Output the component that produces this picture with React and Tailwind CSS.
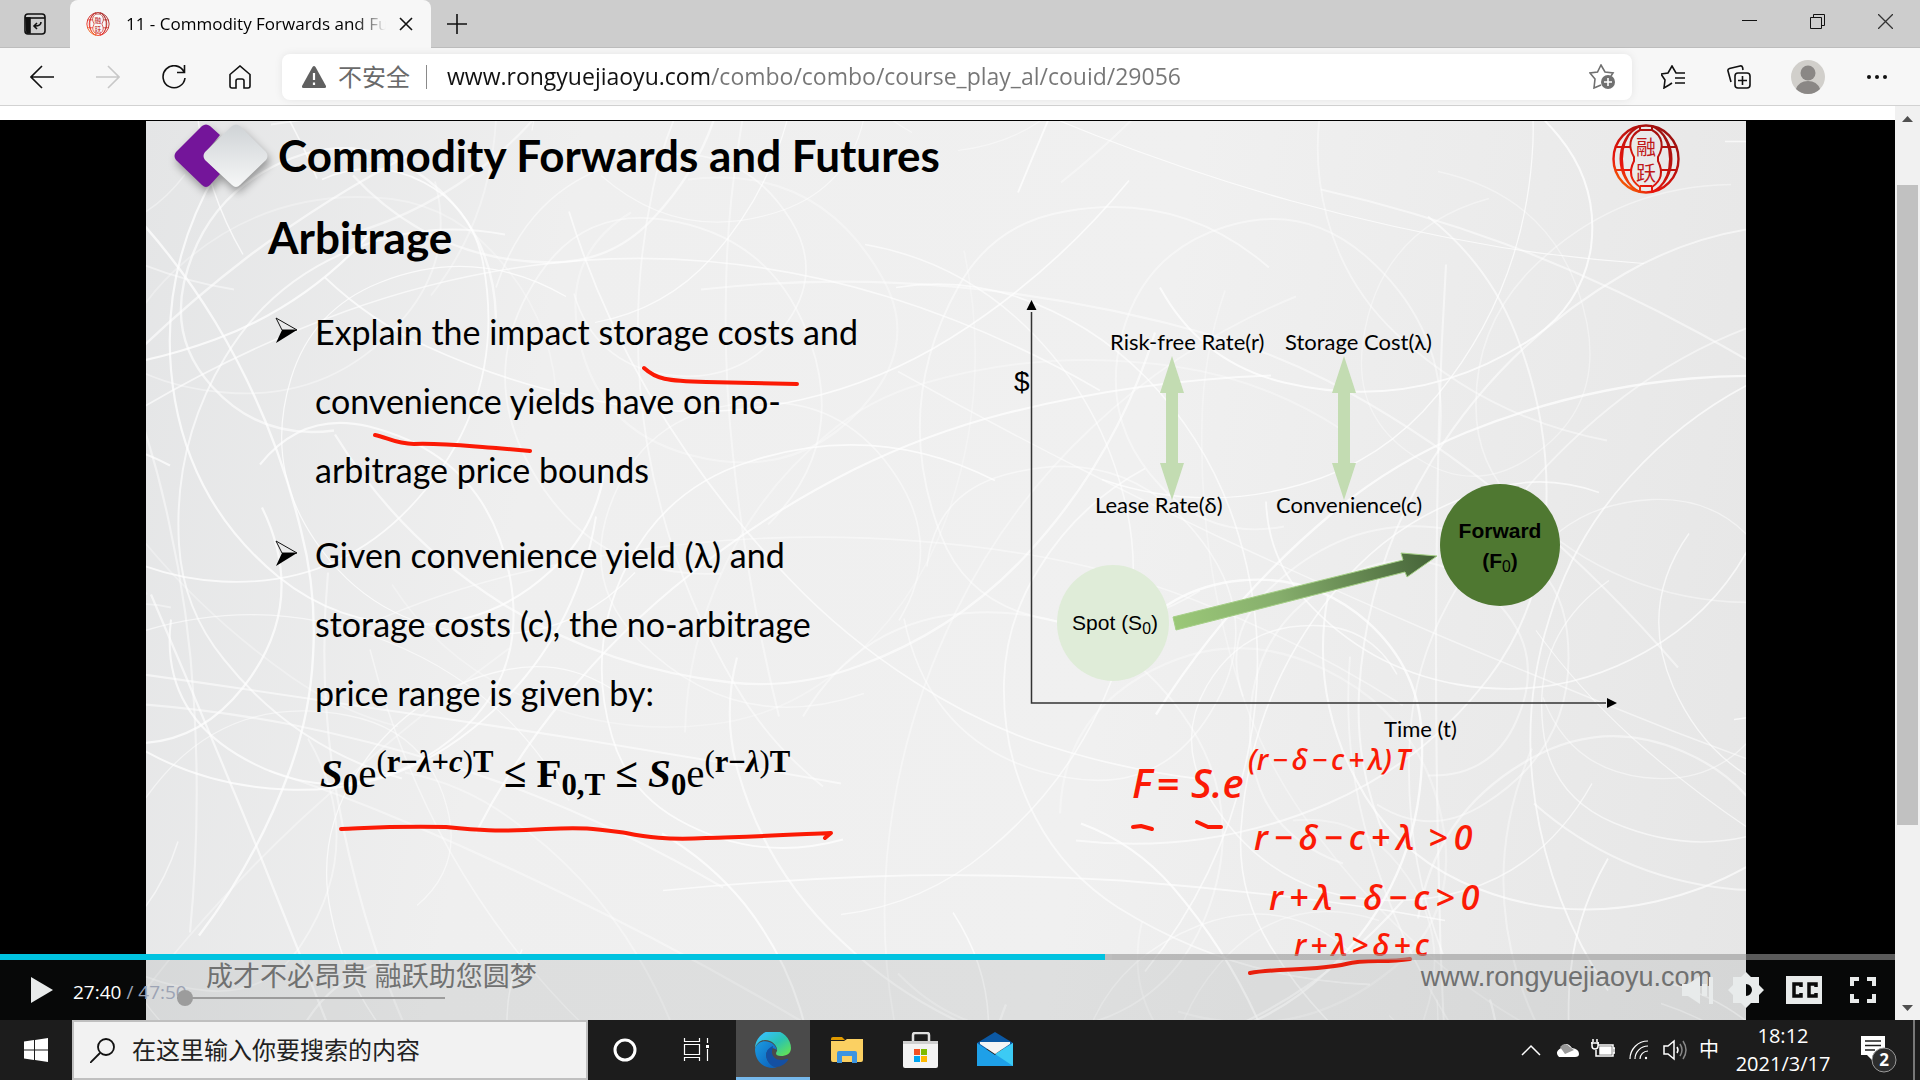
import React, { useState } from 'react';

// long loose strokes for the slide paper, always the same for a given seed
const makeScribbles = (count, seed) => {
  let s = seed;
  const rand = () => {
    s = (s * 16807) % 2147483647;
    return s / 2147483647;
  };
  const lines = [];
  for (let i = 0; i < count; i++) {
    const x = rand() * 1600;
    const y = rand() * 900;
    let d = `M${x.toFixed(0)} ${y.toFixed(0)}`;
    let px = x;
    let py = y;
    let angle = rand() * 6.28;
    const turn = (rand() - 0.5) * 2.4;
    for (let j = 0; j < 5; j++) {
      const len = 110 + rand() * 170;
      const cx = px + Math.cos(angle) * len * 0.5;
      const cy = py + Math.sin(angle) * len * 0.5;
      angle += turn;
      px = cx + Math.cos(angle) * len * 0.5;
      py = cy + Math.sin(angle) * len * 0.5;
      d += ` Q${cx.toFixed(0)} ${cy.toFixed(0)} ${px.toFixed(0)} ${py.toFixed(0)}`;
    }
    lines.push({ d, w: 1.2 + rand() * 1.2, o: 0.3 + rand() * 0.45 });
  }
  return lines;
};

const scribbles = makeScribbles(110, 4211);

const Seal = ({ className, id }) => (
  <svg viewBox="0 0 68 70" className={className} fill="none" stroke={`url(#${id})`} strokeWidth="2">
    <defs>
      <linearGradient id={id} x1="0" y1="70" x2="60" y2="0" gradientUnits="userSpaceOnUse">
        <stop offset="0" stopColor="#ffa800" />
        <stop offset="0.3" stopColor="#e8150c" />
        <stop offset="1" stopColor="#8f1010" />
      </linearGradient>
    </defs>
    <ellipse cx="34" cy="35" rx="32.5" ry="33.5" strokeWidth="2.4" />
    <path d="M28 2C2 14 2 56 28 68M22 5C6 20 6 50 22 65M40 2C66 14 66 56 40 68M46 5C62 20 62 50 46 65" />
    <path d="M28 2v4c-11 6-12 17-6 27v4c-6 12-3 20 6 26v5M40 2v4c11 6 12 17 6 27v4c6 12 3 20-6 26v5" />
    <path d="M4 23h15M49 23h15M4 46h15M49 46h15M28 6h12M28 62h12" />
    <text x="34" y="31" textAnchor="middle" fontSize="20" fill="#c01818" stroke="none" fontFamily="Noto Sans CJK SC, sans-serif">融</text>
    <text x="34" y="57" textAnchor="middle" fontSize="20" fill="#c01818" stroke="none" fontFamily="Noto Sans CJK SC, sans-serif">跃</text>
  </svg>
);

const TitleBar = () => (
  <div className="flex h-12 bg-[#cdcdcd] border-b border-[#bdbdbd]">
    <button aria-label="Tab actions" className="w-[70px] flex items-center justify-center">
      <svg viewBox="0 0 22 22" className="w-[22px] h-[22px]" fill="none" stroke="#111" strokeWidth="1.6">
        <rect x="1" y="1" width="20" height="20" rx="3" />
        <path d="M1 5h20" />
        <path d="M2 5h4v15H3z" fill="#111" />
        <path d="M17 9c0 3-2 4-6 4M13 10l-3 3 3 3" />
      </svg>
    </button>
    <div className="flex items-center w-[361px] h-12 pl-4 pr-[18px] bg-[#f7f7f7] rounded-t-lg">
      <Seal id="tabSeal" className="w-6 h-6 shrink-0" />
      <span className="ml-4 w-[260px] overflow-hidden whitespace-nowrap text-[17px] bg-linear-to-r from-black from-88% to-transparent bg-clip-text text-transparent">
        11 - Commodity Forwards and Futures
      </span>
      <button aria-label="Close tab" className="ml-auto">
        <svg viewBox="0 0 14 14" className="w-[14px] h-[14px]" stroke="#111" strokeWidth="1.6"><path d="M1 1l12 12M13 1L1 13" /></svg>
      </button>
    </div>
    <button aria-label="New tab" className="w-[52px] flex items-center justify-center">
      <svg viewBox="0 0 20 20" className="w-5 h-5" stroke="#111" strokeWidth="1.6"><path d="M10 0v20M0 10h20" /></svg>
    </button>
    <div className="ml-auto flex pb-1">
      <button aria-label="Minimize" className="w-[68px] flex items-center justify-center">
        <svg viewBox="0 0 15 15" className="w-[15px] h-[15px]" stroke="#111"><path d="M0 6.5h15" /></svg>
      </button>
      <button aria-label="Restore" className="w-[68px] flex items-center justify-center">
        <svg viewBox="0 0 15 15" className="w-[15px] h-[15px]" stroke="#111" fill="none"><path d="M.5 3.5h11v11H.5zM3.5 3V.5h11v11H12" /></svg>
      </button>
      <button aria-label="Close" className="w-[69px] flex items-center justify-center">
        <svg viewBox="0 0 15 15" className="w-[15px] h-[15px]" stroke="#333" strokeWidth="1.3"><path d="M0 0l15 15M15 0L0 15" /></svg>
      </button>
    </div>
  </div>
);

const NavButton = ({ label, stroke = '#111', children }) => (
  <button aria-label={label} className="w-[66px] h-full flex items-center justify-center">
    <svg viewBox="0 0 24 24" className="w-6 h-6" fill="none" stroke={stroke} strokeWidth="1.6">{children}</svg>
  </button>
);

const AddressBar = () => {
  const [url, setUrl] = useState('www.rongyuejiaoyu.com/combo/combo/course_play_al/couid/29056');

  return (
    <div className="flex items-center h-[58px] bg-[#f7f7f7] border-b border-[#d2d2d2]">
      <div className="flex h-full pl-[9px]">
        <NavButton label="Back"><path d="M24 12H1M12 1L1 12l11 11" /></NavButton>
        <NavButton label="Forward" stroke="#c8c8c8"><path d="M0 12h23M12 1l11 11-11 11" /></NavButton>
        <NavButton label="Refresh"><path d="M22 7A11 11 0 1 0 23 13M22.5 0v7.5H15" /></NavButton>
        <NavButton label="Home"><path d="M2 9.5L12 1l10 8.5V21q0 2-2 2h-4v-7q0-2-2-2h-4q-2 0-2 2v7H4q-2 0-2-2z" /></NavButton>
      </div>
      <div className="flex flex-1 items-center h-[46px] ml-[9px] pl-5 pr-4 bg-white rounded-lg shadow-[0_0_8px_rgba(0,0,0,0.08)]">
        <svg viewBox="0 0 24 22" className="w-6 h-[22px]" fill="#606060">
          <path d="M10.500 1q1.500-2 3 0L24 20q.5 2-1.500 2h-21Q-.5 22 0 20z" />
          <path d="M12 7v7M12 16.500v2.500" stroke="#fff" strokeWidth="2.2" />
        </svg>
        <span className="ml-3 text-2xl text-[#6a6a6a]">不安全</span>
        <span className="ml-4 w-px h-6 bg-[#8a8a8a]" />
        <input
          aria-label="Address"
          value={url}
          onChange={(e) => setUrl(e.target.value)}
          className="flex-1 ml-5 text-[23px] outline-none text-transparent bg-clip-text bg-[linear-gradient(90deg,#111_263px,#767676_263px)] caret-black"
        />
        <button aria-label="Add to favorites">
          <svg viewBox="0 0 27 25" className="w-[27px] h-[25px]" fill="none" stroke="#707070" strokeWidth="1.6">
            <path d="M12 21l-7 3 1-9-5-6 7.500-1L12 1l4 7 8 1-2 3" />
            <circle cx="19" cy="18" r="7" fill="#707070" stroke="none" />
            <path d="M19 14v8M15 18h8" stroke="#fff" />
          </svg>
        </button>
      </div>
      <div className="flex h-full items-center pl-2 pr-[10px]">
        <NavButton label="Favorites"><path d="M8 20l-5 3 1-8-4-6 7-1 4-7 4 7h9M14 13h10M14 18h10M8 20l3-2" /></NavButton>
        <NavButton label="Collections">
          <path d="M4 17L1 6q-.5-2 1.500-2.600L13 1q2-.5 2.600 1.500L16 5M8 11q0-3 3-3h9q3 0 3 3v9q0 3-3 3h-9q-3 0-3-3zM15.500 11v9M11 15.500h9" />
        </NavButton>
        <button aria-label="Profile" className="w-[72px] flex justify-center">
          <svg viewBox="0 0 34 34" className="w-[34px] h-[34px]">
            <circle cx="17" cy="17" r="17" fill="#d1cfcb" />
            <circle cx="17" cy="13" r="7.5" fill="#8a8785" />
            <path d="M5 29q3-8 12-8t12 8q-5 5-12 5T5 29" fill="#8a8785" />
          </svg>
        </button>
        <NavButton label="Settings and more">
          <g fill="#111" stroke="none"><circle cx="4" cy="12" r="2" /><circle cx="12" cy="12" r="2" /><circle cx="20" cy="12" r="2" /></g>
        </NavButton>
      </div>
    </div>
  );
};

const Bullet = ({ children }) => (
  <li className="flex">
    <svg viewBox="0 0 24 26" className="w-6 h-[26px] mt-5 mr-4 shrink-0">
      <path d="M1 1l21 12H7z" fill="none" stroke="#111" />
      <path d="M7 13h15L1 26z" fill="#000" />
    </svg>
    <div>{children}</div>
  </li>
);

const Formula = () => (
  <p className="pl-[174px] pt-4 text-[41px] leading-[60px] font-bold font-['Liberation_Serif',serif] whitespace-nowrap">
    <i>S</i><sub>0</sub><span className="font-normal">e</span>
    <sup><span className="font-normal">(</span>r−<i>λ</i>+<i>c</i><span className="font-normal">)</span>T</sup>
    {' ≤ F'}<sub>0,T</sub>{' ≤ '}
    <i>S</i><sub>0</sub><span className="font-normal">e</span>
    <sup><span className="font-normal">(</span>r−<i>λ</i><span className="font-normal">)</span>T</sup>
  </p>
);

const labels = [
  { text: 'Risk-free Rate(r)', place: 'left-[100px] top-[40px]' },
  { text: 'Storage Cost(λ)', place: 'left-[275px] top-[40px]' },
  { text: 'Lease Rate(δ)', place: 'left-[85px] top-[203px]' },
  { text: 'Convenience(c)', place: 'left-[266px] top-[203px]' },
  { text: 'Time (t)', place: 'left-[374px] top-[427px]' },
];

const Diagram = () => (
  <div className="relative w-[620px] h-[470px] text-[22px]">
    <svg viewBox="0 0 620 470" className="absolute inset-0 w-full h-full">
      <defs>
        <linearGradient id="rise" x1="163" y1="335" x2="427" y2="266" gradientUnits="userSpaceOnUse">
          <stop offset="0" stopColor="#9bc878" />
          <stop offset="0.4" stopColor="#86ae6c" />
          <stop offset="1" stopColor="#446237" />
        </linearGradient>
      </defs>
      <path d="M21.500 22V413H596" fill="none" stroke="#333" strokeWidth="1.5" />
      <path d="M21.500 10l5 10h-10zM607 413l-10-5v10z" fill="#000" />
      <path d="M162 66l12 37h-6v70h6l-12 37-12-37h6v-70h-6z" fill="#c3dcb2" />
      <path d="M334 66l12 37h-6v70h6l-12 37-12-37h6v-70h-6z" fill="#c3dcb2" />
      <ellipse cx="103" cy="333" rx="56" ry="58" fill="#dfecd8" />
      <ellipse cx="490" cy="255" rx="60" ry="61" fill="#4f7831" />
      <path d="M163 327l230-57-2-7 36 3-30 21-2-5-229 58z" fill="url(#rise)" stroke="#a5cf86" />
    </svg>
    {labels.map((label) => (
      <span key={label.text} className={`absolute leading-6 whitespace-nowrap ${label.place}`}>{label.text}</span>
    ))}
    <span className="absolute left-[4px] top-[76px] text-[28px] leading-8 font-['Liberation_Sans',sans-serif]">$</span>
    <span className="absolute left-[45px] top-[321px] w-[120px] text-center text-[21px] leading-6 font-['Liberation_Sans',sans-serif]">
      Spot (S<sub>0</sub>)
    </span>
    <span className="absolute left-[430px] top-[226px] w-[120px] text-center text-[21px] leading-[30px] font-bold font-['Liberation_Sans',sans-serif]">
      Forward<br />(F<sub className="font-normal">0</sub>)
    </span>
  </div>
);

// red pen notes lying over the slide
const Ink = () => (
  <div className="absolute inset-0 text-[#fb1a05] font-['Open_Sans','Noto_Sans',sans-serif] italic whitespace-nowrap">
    <svg viewBox="0 0 1600 900" className="absolute left-0 top-0 w-[1600px] h-[900px]" fill="none" stroke="#fb1a05" strokeWidth="4" strokeLinecap="round" strokeLinejoin="round">
      <path d="M498 247C510 258 520 260 560 261L651 263" />
      <path d="M229 314C240 316 250 323 268 323C300 322 330 326 350 327L384 330" />
      <path d="M195 708C240 706 250 705 300 706C330 709 350 711 400 708C440 706 450 708 480 712C500 716 520 719 560 717C600 716 640 714 685 712L679 717" />
      <path d="M987 706l8-1 11 3M1051 701l11 5h13" />
      <path d="M1104 852C1130 847 1170 850 1200 843C1220 838 1240 842 1264 838" />
    </svg>
    <div className="absolute left-[986px] top-[634px] flex items-baseline text-[40px] leading-[56px] font-semibold">
      <span>F</span><span className="ml-1">=</span><span className="ml-3">S.</span><span>e</span>
    </div>
    <div className="absolute left-[1102px] top-[622px] flex gap-1 text-[28px] leading-8 font-semibold">
      <span>(r</span><span>−</span><span>δ</span><span>−</span><span>c</span><span>+</span><span>λ)</span><span>T</span>
    </div>
    <div className="absolute left-[1108px] top-[694px] flex gap-[6px] text-[34px] leading-[44px] font-semibold">
      <span>r</span><span>−</span><span>δ</span><span>−</span><span>c</span><span>+</span><span>λ</span><span className="ml-2">&gt;</span><span>0</span>
    </div>
    <div className="absolute left-[1123px] top-[754px] flex gap-[6px] text-[34px] leading-[44px] font-semibold">
      <span>r</span><span>+</span><span>λ</span><span>−</span><span>δ</span><span>−</span><span>c</span><span>&gt;</span><span>0</span>
    </div>
    <div className="absolute left-[1148px] top-[806px] flex gap-1 text-[30px] leading-9 font-semibold">
      <span>r</span><span>+</span><span>λ</span><span>&gt;</span><span>δ</span><span>+</span><span>c</span>
    </div>
  </div>
);

const Slide = () => (
  <div className="relative w-full max-w-[1600px] h-full mx-auto overflow-hidden border-t border-black bg-[linear-gradient(100deg,#e4e5e6,#efefef_25%,#f0f0f0_60%,#e6e6e6)] text-black font-[Lato,'Noto_Sans',sans-serif]">
    <svg viewBox="0 0 1600 900" preserveAspectRatio="xMidYMid slice" className="absolute inset-0 w-full h-full" fill="none" stroke="#fff">
      {scribbles.map((line, i) => (
        <path key={i} d={line.d} strokeWidth={line.w} strokeOpacity={line.o} />
      ))}
    </svg>
    <div className="relative">
      <header className="flex items-center h-[68px] pl-7 pr-[66px]">
        <svg viewBox="0 0 96 78" className="w-24 h-[78px] mt-1 overflow-visible">
          <defs>
            <linearGradient id="tile" x1="0" y1="0" x2="0" y2="1">
              <stop offset="0" stopColor="#cfd3d6" />
              <stop offset="1" stopColor="#f6f7f7" />
            </linearGradient>
          </defs>
          <g className="drop-shadow-[2px_5px_4px_rgba(0,0,0,0.35)]">
            <path d="M28 8q4-3 8 0l10 9-14 17q-3 4 0 8l14 14-10 11q-4 4-8 0L2 42q-3-4 0-8z" fill="#74159a" />
            <path d="M58 8q4-3 8 0l26 26q3 4 0 8L66 67q-4 4-8 0L31 42q-3-4 0-8z" fill="url(#tile)" />
          </g>
        </svg>
        <h1 className="ml-2 text-[44px] leading-[52px] font-bold whitespace-nowrap">Commodity Forwards and Futures</h1>
        <Seal id="slideSeal" className="ml-auto mt-2 w-[68px] h-[70px]" />
      </header>
      <div className="flex justify-between pr-[116px]">
        <section className="w-[740px]">
          <h2 className="pl-[122px] pt-[22px] text-[44px] leading-[52px] font-bold">Arbitrage</h2>
          <ul className="flex flex-col gap-4 pt-[34px] pl-[129px] text-[34px] leading-[69px] whitespace-nowrap">
            <Bullet>Explain the impact storage costs and<br />convenience yields have on no-<br />arbitrage price bounds</Bullet>
            <Bullet>Given convenience yield (λ) and<br />storage costs (c), the no-arbitrage<br />price range is given by:</Bullet>
          </ul>
          <Formula />
        </section>
        <div className="pt-[101px]">
          <Diagram />
        </div>
      </div>
    </div>
    <Ink />
    <div className="absolute inset-x-0 bottom-[25px] flex items-center justify-between pl-[60px] pr-[34px] text-[27px] leading-9 text-[#757575]">
      <span className="font-['Liberation_Serif','Noto_Sans_CJK_SC',serif]">成才不必昂贵 融跃助您圆梦</span>
      <span className="font-['Liberation_Sans',sans-serif]">www.rongyuejiaoyu.com</span>
    </div>
  </div>
);

const Controls = () => (
  <div className="absolute inset-x-0 bottom-0">
    <div className="h-[6px] flex bg-[#969696]/60">
      <div className="w-[58.3%] bg-[#00c3e0]" />
      <div className="w-[7px] bg-[#bdbdbd]" />
    </div>
    <div className="flex items-center h-[60px] bg-[#465050]/10 px-[19px]">
      <button aria-label="Play" className="w-[46px] flex justify-center">
        <svg viewBox="0 0 22 26" className="w-[22px] h-[26px]" fill="#e8ebeb"><path d="M0 0l22 13L0 26z" /></svg>
      </button>
      <div className="ml-2 w-[104px] pt-1 whitespace-nowrap text-[19px] text-[#9ca3b4]"><span className="text-white">27:40</span> / 47:50</div>
      <input
        type="range"
        aria-label="Volume"
        defaultValue="0"
        className="w-[268px] h-4 mt-4 appearance-none bg-[linear-gradient(#9c9c9c,#9c9c9c)] bg-no-repeat bg-center bg-[length:100%_2px] [&::-webkit-slider-thumb]:appearance-none [&::-webkit-slider-thumb]:w-4 [&::-webkit-slider-thumb]:h-4 [&::-webkit-slider-thumb]:rounded-full [&::-webkit-slider-thumb]:bg-[#9c9c9c]"
      />
      <div className="ml-auto flex items-center">
        <button aria-label="Mute" className="w-12 flex justify-center">
          <svg viewBox="0 0 32 28" className="w-8 h-7" fill="#e8ebeb"><path d="M0 8h6l12-8v28L6 20H0zM20 8h5v12h-5zM27 1h4v27h-4z" /></svg>
        </button>
        <button aria-label="Settings" className="w-12 flex justify-center">
          <svg viewBox="0 0 36 36" className="w-9 h-9" fill="#e8ebeb" fillRule="evenodd">
            <path d="M18 0l5 5h8v8l5 5-5 5v8h-8l-5 5-5-5H5v-8l-5-5 5-5V5h8zM18 12v12a6 6 0 0 0 0-12" />
          </svg>
        </button>
        <button aria-label="Captions" className="ml-4 w-9 h-7 bg-[#e8ebeb]">
          <svg viewBox="0 0 36 28" className="w-9 h-7" fill="none" stroke="#0a0a0a" strokeWidth="3.5"><path d="M15 11V8H8v12h7v-3M30 11V8h-7v12h7v-3" /></svg>
        </button>
        <button aria-label="Full screen" className="ml-7">
          <svg viewBox="0 0 26 26" className="w-[26px] h-[26px]" fill="none" stroke="#e8ebeb" strokeWidth="4"><path d="M2 9V2h7M17 2h7v7M24 17v7h-7M9 24H2v-7" /></svg>
        </button>
      </div>
    </div>
  </div>
);

const Scrollbar = () => (
  <div className="w-[25px] flex flex-col bg-[#f1f1f1] px-[2px]">
    <svg viewBox="0 0 21 25" className="w-[21px] h-[25px]" fill="#505050"><path d="M5 16l5.500-6 5.500 6z" /></svg>
    <div className="grow-[54]" />
    <div className="grow-[640] bg-[#c1c1c1]" />
    <div className="grow-[170]" />
    <svg viewBox="0 0 21 25" className="w-[21px] h-[25px]" fill="#505050"><path d="M5 10l5.500 6 5.500-6z" /></svg>
  </div>
);

const TaskButton = ({ label, active, children }) => (
  <button aria-label={label} className={`w-[74px] h-full flex items-center justify-center ${active ? 'bg-[#4a4a4a] border-b-[3px] border-[#76b9ed] pt-[3px]' : ''}`}>
    <svg viewBox="0 0 36 36" className="w-9 h-9">{children}</svg>
  </button>
);

const Tray = ({ label, children }) => (
  <button aria-label={label}>
    <svg viewBox="0 0 24 24" className="w-6 h-6" fill="none" stroke="#fff" strokeWidth="1.5">{children}</svg>
  </button>
);

const Taskbar = () => (
  <div className="flex h-[60px] bg-[#1c1c1c] text-white">
    <button aria-label="Start" className="w-[72px] flex items-center justify-center">
      <svg viewBox="0 0 24 24" className="w-6 h-6" fill="#fff"><path d="M0 3.500L10 2v9.500H0zM11 2l13-2v11.500H11zM0 12.500h10V22L0 20.500zM11 12.500h13V24l-13-2z" /></svg>
    </button>
    <label className="flex items-center w-[516px] pl-4 bg-[#f2f2f2] border-2 border-[#c0c0c0]">
      <svg viewBox="0 0 25 25" className="w-[25px] h-[25px]" fill="none" stroke="#111" strokeWidth="1.8"><circle cx="16" cy="9" r="8" /><path d="M10 15L0 25" /></svg>
      <input type="text" aria-label="搜索" placeholder="在这里输入你要搜索的内容" className="ml-[17px] w-[400px] text-2xl bg-transparent outline-none placeholder:text-[#222]" />
    </label>
    <TaskButton label="Cortana"><circle cx="18" cy="18" r="10" fill="none" stroke="#fff" strokeWidth="3" /></TaskButton>
    <TaskButton label="Task view">
      <path d="M3.500 6v3.500h15V6M3.500 12.500h15v10h-15zM3.500 29v-3.500h15V29M26.500 6v5M26.500 17v12" fill="none" stroke="#fff" strokeWidth="1.2" />
      <path d="M25 13h3v3h-3z" fill="#fff" />
    </TaskButton>
    <TaskButton label="Edge" active>
      <defs>
        <linearGradient id="edgeTop" x1="0" y1="0" x2="1" y2="1"><stop offset="0.2" stopColor="#35c1f1" /><stop offset="0.55" stopColor="#2bc3b0" /><stop offset="1" stopColor="#6ee844" /></linearGradient>
        <linearGradient id="edgeLow" x1="0" y1="0" x2="1" y2="1"><stop offset="0" stopColor="#1b9de2" /><stop offset="1" stopColor="#0b5cb8" /></linearGradient>
      </defs>
      <path d="M0 17A18 18 0 0 1 36 16C36 22 31 24 26 24C21 24 20 22 22 19C23 15 18 8 10 8C5 8 1 12 0 17z" fill="url(#edgeTop)" />
      <path d="M0 17C2 10 9 8 14 10C18 11 21 14 22 18C15 13 9 20 12 27C14 32 17 34 22 35.500C10 38 0 30 0 17z" fill="url(#edgeLow)" />
      <path d="M18 14C10 17 9 26 15 32C20 38 29 34 33 28C34 26 32 27 31 27C24 30 17 26 17 20C17 17 18 16 18 14z" fill="#1450a3" />
    </TaskButton>
    <TaskButton label="File Explorer">
      <path d="M2 7q0-2 2-2h9l3 3H2z" fill="#e09a00" />
      <path d="M2 9h13l3-2h16v21q0 2-2 2H4q-2 0-2-2z" fill="#fbd062" />
      <path d="M8 31V21q0-2 2-2h16q2 0 2 2v10h-5v-7H13v7z" fill="#3c94e0" />
    </TaskButton>
    <TaskButton label="Store">
      <path d="M10 11V3q0-2 2-2h12q2 0 2 2v8" fill="none" stroke="#e0e0e0" strokeWidth="2.5" />
      <path d="M0 9h35v25q0 2-2 2H2q-2 0-2-2z" fill="#f3f3f3" />
      <path d="M0 9h35v3H0z" fill="#cfcfcf" />
      <path d="M11 17h6v6h-6z" fill="#f25022" /><path d="M18 17h6v6h-6z" fill="#7fba00" />
      <path d="M11 24h6v6h-6z" fill="#00a4ef" /><path d="M18 24h6v6h-6z" fill="#ffb900" />
    </TaskButton>
    <TaskButton label="Mail">
      <path d="M0 11L18 0l18 11v6H0z" fill="#0c59a4" />
      <path d="M0 11l18 12L36 11v23H0z" fill="#1ea0e8" />
      <path d="M36 11v23L18 22z" fill="#3ccbf4" />
      <path d="M3 10h30v2L18 22 3 12z" fill="#f5f5f5" />
    </TaskButton>
    <div className="ml-auto flex items-center gap-3">
      <Tray label="Show hidden icons"><path d="M3 17l9-9 9 9" /></Tray>
      <Tray label="OneDrive"><path d="M4 19q-5-5 2-9 5-8 11 0 7 1 7 6 0 3-4 3z" fill="#fff" stroke="none" /><path d="M5 9q5-6 10 0l4 3-9 4z" fill="#999" stroke="none" /></Tray>
      <Tray label="Battery"><path d="M7 7h15v11H5v-6M22 10h2v5h-2M1 4v4q0 3 3 3t3-3V4M2 1v3M6 1v3M0 5h8" /><path d="M9 9h11v7H9z" fill="#fff" /></Tray>
      <Tray label="Network"><path d="M3 21A18 18 0 0 1 21 3M8 21A13 13 0 0 1 21 8M13 21a8 8 0 0 1 8-8" strokeWidth="1.2" /><circle cx="19" cy="20" r="1.2" fill="#fff" stroke="none" /></Tray>
      <Tray label="Speakers"><path d="M1 8h4l6-5v18l-6-5H1zM14 9q2 3 0 6" /><path d="M17 6q4 6 0 12M20 3q6 9 0 18" stroke="#888" /></Tray>
      <button className="text-xl leading-6">中</button>
      <div className="w-[100px] ml-[2px] text-center text-[20px] leading-7">
        <div>18:12</div>
        <div>2021/3/17</div>
      </div>
      <button aria-label="Notifications" className="ml-4">
        <svg viewBox="0 0 36 38" className="w-9 h-[38px] mt-2">
          <path d="M0 1h24v19H12v6l-6-6H0z" fill="#fff" />
          <path d="M4 6h16M4 10.500h16M4 15h10" stroke="#1c1c1c" strokeWidth="1.5" />
          <circle cx="23" cy="25" r="12" fill="#2d2d2d" stroke="#999" />
          <text x="23" y="31" textAnchor="middle" fontSize="17" fontWeight="700" fill="#fff">2</text>
        </svg>
      </button>
      <div className="self-stretch w-[7px] ml-1 border-l-2 border-[#777]" />
    </div>
  </div>
);

const App = () => {
  return (
    <div className="min-h-screen flex flex-col bg-white font-['Open_Sans','Noto_Sans_CJK_SC',sans-serif]">
      <TitleBar />
      <AddressBar />
      <main className="flex flex-1">
        <div className="flex-1 flex flex-col pt-[14px]">
          <div className="relative flex-1 bg-black pr-[3px]">
            <Slide />
            <Controls />
          </div>
        </div>
        <Scrollbar />
      </main>
      <Taskbar />
    </div>
  );
};

export default App;
